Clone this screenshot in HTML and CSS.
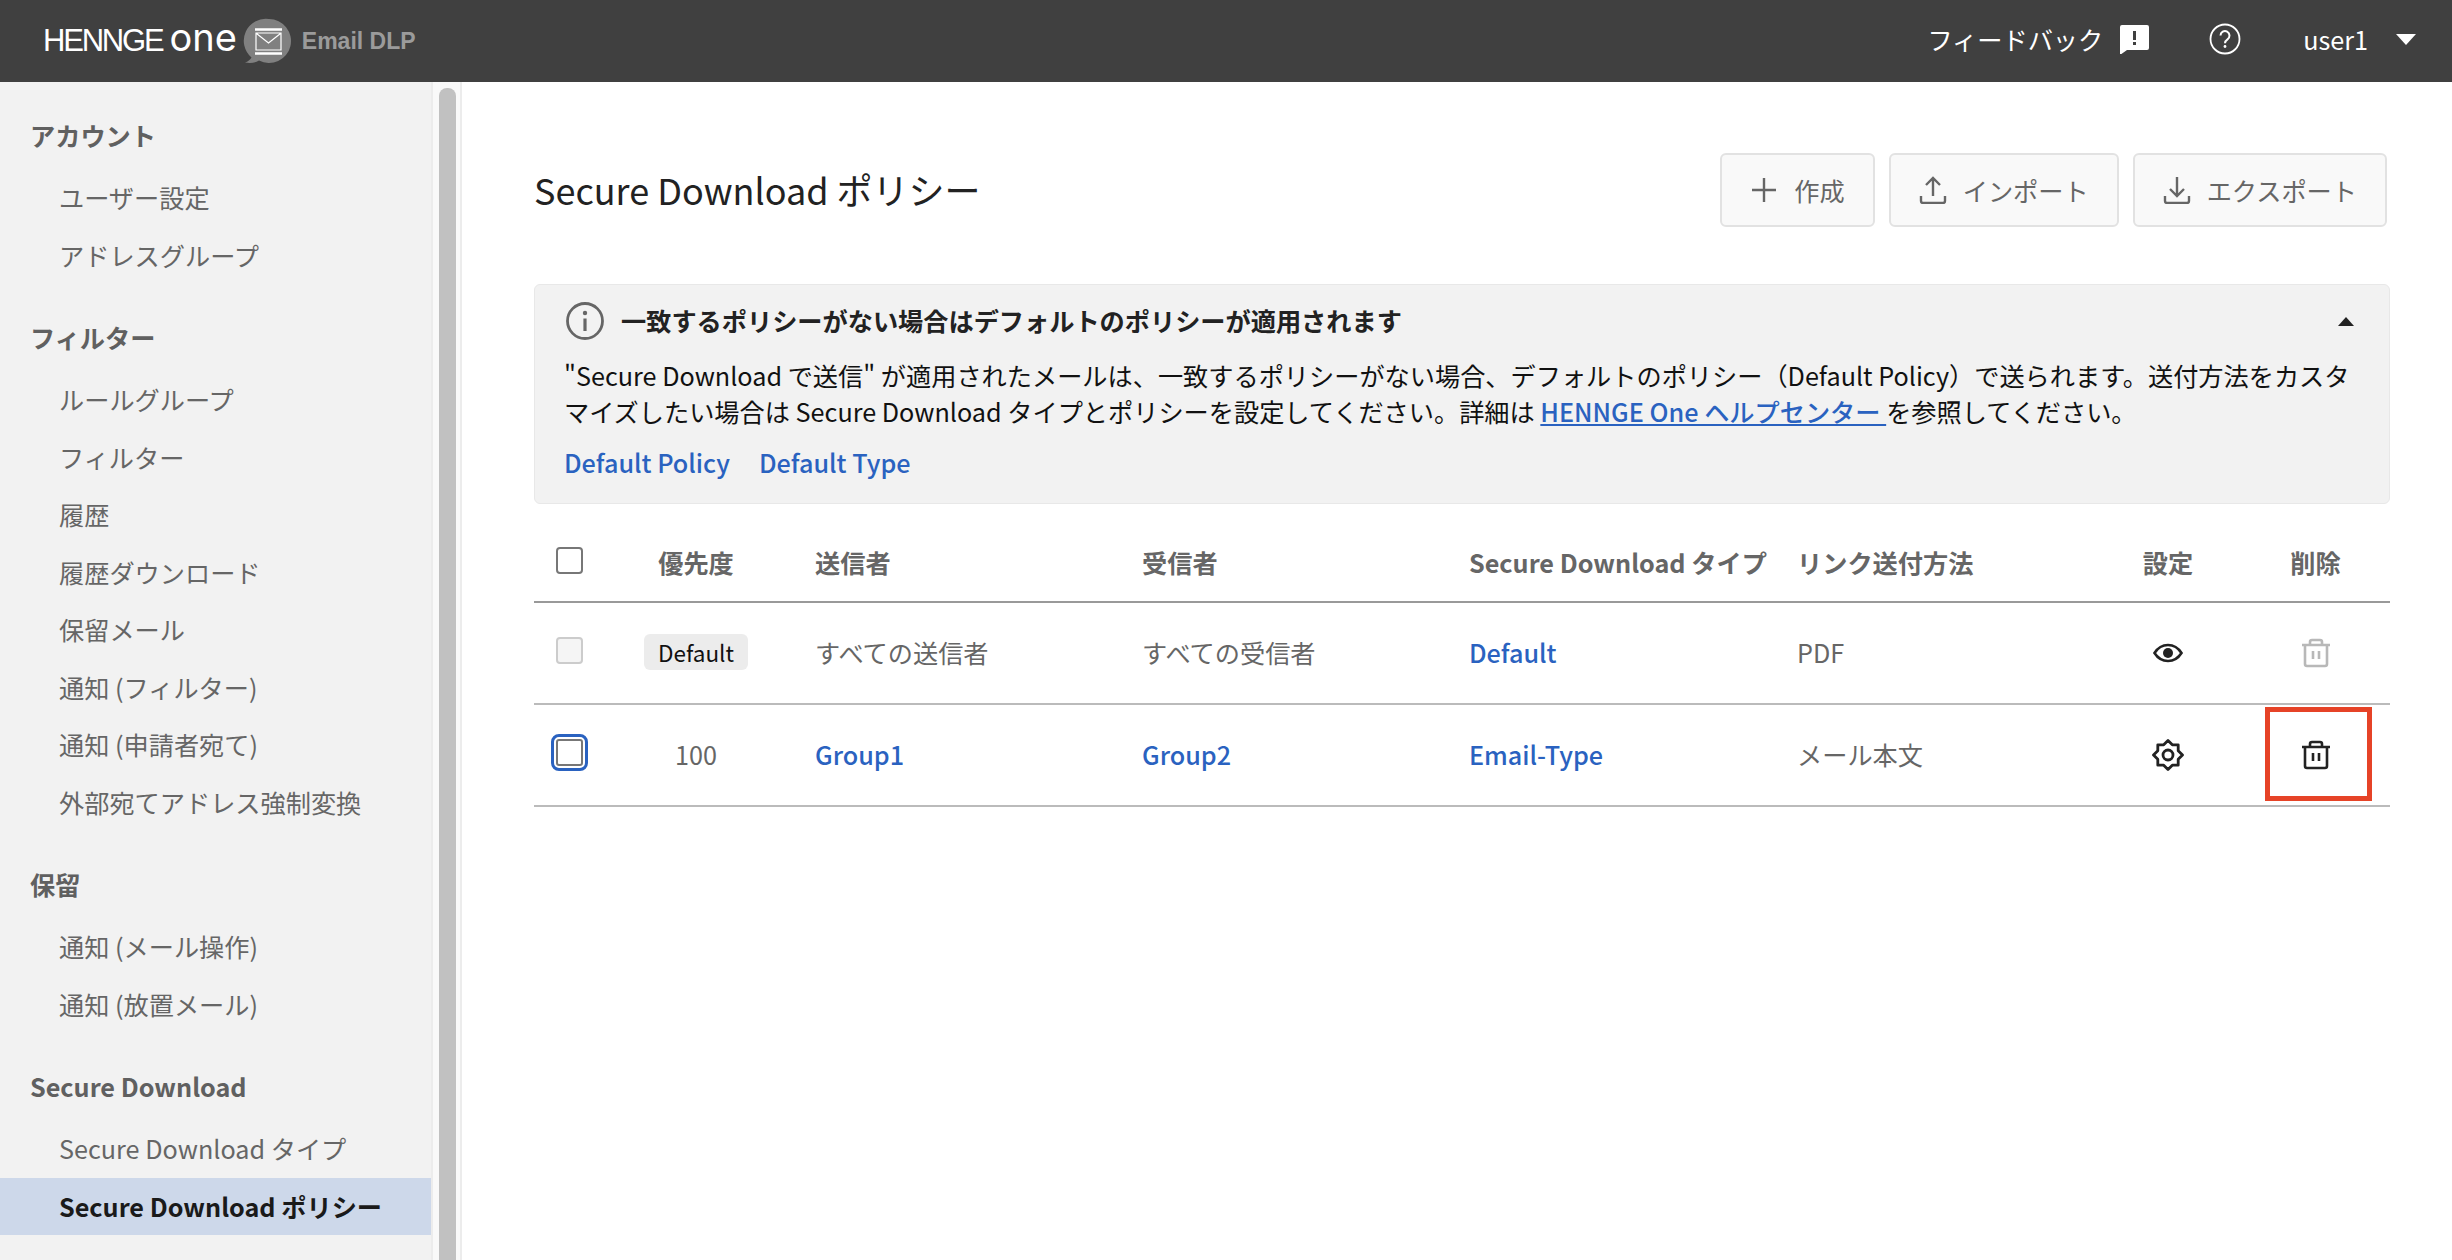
FILE: index.html

```html
<!DOCTYPE html>
<html lang="ja">
<head>
  <meta charset="UTF-8" />
  <title>Secure Download ポリシー</title>
  <link rel="stylesheet" href="styles.css">
</head>
<body>
  <header class="topbar">
    <div class="brand">
      <span class="brand-name">HENNGE</span>
      <span class="brand-one">one</span>
      <svg class="brand-icon" viewBox="0 0 48 46" width="48" height="46">
        <path d="M26 1a22 22 0 1 1-10 41.600C12 45 7 45.500 2 44.500c3-1 5-2.500 6.500-5A22 22 0 0 1 26 1z" fill="#808080"/>
        <path d="M12 11.500h27M12 35.500h27" stroke="#fff" stroke-width="2.500" fill="none"/>
        <path d="M13 15h25v17H13zM13.500 15.500l12 9.500 12-9.500" stroke="#fff" stroke-width="1.200" fill="none"/>
      </svg>
      <span class="brand-app">Email DLP</span>
    </div>
    <div class="top-actions">
      <span class="feedback">フィードバック</span>
      <svg class="icon-feedback" viewBox="0 0 30 30" width="30" height="30">
        <path d="M1 3a2 2 0 0 1 2-2h25a2 2 0 0 1 2 2v21a2 2 0 0 1-2 2H8l-7 5z" fill="#fff"/>
        <path d="M14 7h3v9h-3zM14 18h3v3h-3z" fill="#404040"/>
      </svg>
      <svg class="icon-help" viewBox="0 0 32 32" width="32" height="32">
        <circle cx="16" cy="16" r="14.500" fill="none" stroke="#fff" stroke-width="1.800"/>
        <path d="M11.500 12.500a4.500 4.500 0 1 1 7 3.800c-1.700 1.100-2.500 2-2.500 4" fill="none" stroke="#fff" stroke-width="2"/>
        <circle cx="16" cy="23.500" r="1.400" fill="#fff"/>
      </svg>
      <span class="user">user1</span>
      <span class="user-caret"></span>
    </div>
  </header>

  <div class="layout">
    <aside class="sidebar">
      <nav class="nav">
        <div class="nav-group">
          <div class="nav-head">アカウント</div>
          <a class="nav-item">ユーザー設定</a>
          <a class="nav-item">アドレスグループ</a>
        </div>
        <div class="nav-group">
          <div class="nav-head">フィルター</div>
          <a class="nav-item">ルールグループ</a>
          <a class="nav-item">フィルター</a>
          <a class="nav-item">履歴</a>
          <a class="nav-item">履歴ダウンロード</a>
          <a class="nav-item">保留メール</a>
          <a class="nav-item">通知 (フィルター)</a>
          <a class="nav-item">通知 (申請者宛て)</a>
          <a class="nav-item">外部宛てアドレス強制変換</a>
        </div>
        <div class="nav-group">
          <div class="nav-head">保留</div>
          <a class="nav-item">通知 (メール操作)</a>
          <a class="nav-item">通知 (放置メール)</a>
        </div>
        <div class="nav-group">
          <div class="nav-head">Secure Download</div>
          <a class="nav-item">Secure Download タイプ</a>
          <a class="nav-item active">Secure Download ポリシー</a>
        </div>
      </nav>
      <div class="scroll-track"><div class="scroll-thumb"></div></div>
    </aside>

    <main class="main">
      <div class="title-row">
        <h1>Secure Download ポリシー</h1>
        <div class="buttons">
          <button class="btn">
            <svg viewBox="0 0 28 28" width="28" height="28"><path d="M14 2v24M2 14h24" stroke="#666" stroke-width="2.400" fill="none"/></svg>
            作成
          </button>
          <button class="btn">
            <svg viewBox="0 0 28 28" width="28" height="28"><path d="M14 20V2M7 9l7-7 7 7M2 20v5a2 2 0 0 0 2 2h20a2 2 0 0 0 2-2v-5" stroke="#666" stroke-width="2.400" fill="none"/></svg>
            インポート
          </button>
          <button class="btn">
            <svg viewBox="0 0 28 28" width="28" height="28"><path d="M14 1v19M7 13l7 7 7-7M2 20v5a2 2 0 0 0 2 2h20a2 2 0 0 0 2-2v-5" stroke="#666" stroke-width="2.400" fill="none"/></svg>
            エクスポート
          </button>
        </div>
      </div>

      <section class="notice">
        <div class="notice-head">
          <svg viewBox="0 0 38 38" width="38" height="38">
            <circle cx="19" cy="19" r="17.500" fill="none" stroke="#666" stroke-width="2.800"/>
            <path d="M19 16.500V29" stroke="#666" stroke-width="3.200" fill="none"/>
            <circle cx="19" cy="11" r="2.200" fill="#666"/>
          </svg>
          <strong>一致するポリシーがない場合はデフォルトのポリシーが適用されます</strong>
          <span class="notice-caret"></span>
        </div>
        <p>"Secure Download で送信" が適用されたメールは、一致するポリシーがない場合、デフォルトのポリシー（Default Policy）で送られます。送付方法をカスタマイズしたい場合は Secure Download タイプとポリシーを設定してください。詳細は <a class="help-link">HENNGE One ヘルプセンター </a>を参照してください。</p>
        <div class="notice-links">
          <a class="link">Default Policy</a>
          <a class="link">Default Type</a>
        </div>
      </section>

      <table class="policy">
        <colgroup>
          <col class="c-check"><col class="c-prio"><col class="c-from"><col class="c-to"><col class="c-type"><col class="c-send"><col class="c-set"><col class="c-del">
        </colgroup>
        <thead>
          <tr>
            <th class="center"><span class="check"></span></th>
            <th class="center">優先度</th>
            <th class="pad-from">送信者</th>
            <th>受信者</th>
            <th>Secure Download タイプ</th>
            <th>リンク送付方法</th>
            <th class="center">設定</th>
            <th class="center">削除</th>
          </tr>
        </thead>
        <tbody>
          <tr>
            <td class="center"><span class="check disabled"></span></td>
            <td class="center"><span class="tag">Default</span></td>
            <td class="pad-from">すべての送信者</td>
            <td>すべての受信者</td>
            <td><a class="link">Default</a></td>
            <td>PDF</td>
            <td class="center">
              <svg class="cell-icon" viewBox="0 0 32 32" width="32" height="32">
                <path d="M2.500 16C6 10.500 10.500 8 16 8s10 2.500 13.500 8C26 21.500 21.500 24 16 24S6 21.500 2.500 16z" fill="none" stroke="#222" stroke-width="2.600"/>
                <circle cx="16" cy="16" r="5" fill="#222"/>
              </svg>
            </td>
            <td class="center">
              <svg class="cell-icon" viewBox="0 0 32 32" width="32" height="32">
                <path d="M2 8h28M10 8V5a2 2 0 0 1 2-2h8a2 2 0 0 1 2 2v3M5 8v19a2 2 0 0 0 2 2h18a2 2 0 0 0 2-2V8M13 14v8M19 14v8" fill="none" stroke="#b8b8b8" stroke-width="2.600"/>
              </svg>
            </td>
          </tr>
          <tr>
            <td class="center"><span class="check focused"></span></td>
            <td class="center">100</td>
            <td class="pad-from"><a class="link">Group1</a></td>
            <td><a class="link">Group2</a></td>
            <td><a class="link">Email-Type</a></td>
            <td>メール本文</td>
            <td class="center">
              <svg class="cell-icon" viewBox="0 0 32 32" width="32" height="32">
                <path d="M16 1.500l4.300 4.300h5.900v5.900l4.300 4.300-4.300 4.300v5.900h-5.900L16 30.500l-4.300-4.300H5.800v-5.900L1.500 16l4.300-4.300V5.800h5.900z" fill="none" stroke="#222" stroke-width="2.800" stroke-linejoin="round"/>
                <circle cx="16" cy="16" r="5" fill="none" stroke="#222" stroke-width="2.800"/>
              </svg>
            </td>
            <td class="center del-cell">
              <svg class="cell-icon" viewBox="0 0 32 32" width="32" height="32">
                <path d="M2 8h28M10 8V5a2 2 0 0 1 2-2h8a2 2 0 0 1 2 2v3M5 8v19a2 2 0 0 0 2 2h18a2 2 0 0 0 2-2V8M13 14v8M19 14v8" fill="none" stroke="#222" stroke-width="2.600"/>
              </svg>
              <span class="callout"></span>
            </td>
          </tr>
        </tbody>
      </table>
    </main>
  </div>
</body>
</html>
```

FILE: styles.css

```css
* { box-sizing: border-box; }
html, body { height: 100%; }
body { margin: 0; overflow: hidden; background: #fff; color: #666; font-family: "Noto Sans CJK JP", "Noto Sans", sans-serif; font-size: 25.2px; }

.topbar { height: 82px; background: #404040; display: flex; align-items: center; justify-content: space-between; padding-left: 43px; color: #fff; }
.brand { display: flex; align-items: center; }
.brand-name { font-family: "Liberation Sans", sans-serif; font-size: 31px; letter-spacing: -2.200px; }
.brand-one { font-family: Inter, sans-serif; font-size: 38px; font-weight: 400; line-height: 1; margin-left: 7px; margin-top: -8px; }
.brand-icon { margin-left: 6px; }
.brand-app { font-family: "Liberation Sans", sans-serif; font-weight: bold; font-size: 23px; color: #9b9b9b; margin-left: 11px; }

.top-actions { display: flex; align-items: center; padding-bottom: 5px; }
.icon-feedback { margin-left: 16px; }
.icon-help { margin-left: 60px; }
.user { margin-left: 62px; }
.user-caret { width: 0; height: 0; margin: 2px 36px 0 28px; border-left: 10px solid transparent; border-right: 10px solid transparent; border-top: 11px solid #fff; }

.layout { display: flex; height: 1178px; }
.sidebar { width: 462px; flex: none; display: flex; overflow: hidden; }
.nav { width: 431px; background: #f2f2f2; flex: none; }
.nav-group { padding-top: 21px; }
.nav-head { height: 66px; line-height: 65px; padding-left: 30px; font-weight: bold; color: #606060; }
.nav-item { display: block; height: 57.5px; line-height: 57px; padding-left: 59px; color: #666; }
.nav-item.active { background: #cdd8ea; color: #1a1a1a; font-weight: bold; }
.scroll-track { flex: 1; background: #f9f9f9; border-left: 2px solid #ececec; border-right: 2px solid #ececec; padding: 6px 4px 0 6px; }
.scroll-thumb { height: 100%; background: #c1c1c1; border-radius: 8px 8px 0 0; }

.main { flex: 1; padding: 71px 62px 0 72px; }
.title-row { display: flex; justify-content: space-between; align-items: center; height: 74px; padding-right: 3px; }
h1 { margin: 0; font-size: 36px; font-weight: 400; color: #222; padding-bottom: 2px; }
.buttons { display: flex; gap: 14px; }
.btn { height: 74px; padding: 0 28px; display: flex; align-items: center; gap: 16px; background: #f9f9f9; border: 2px solid #e2e2e2; border-radius: 6px; font: inherit; color: #666; }

.notice { margin-top: 57px; height: 220px; background: #f2f2f2; border: 1px solid #e8e8e8; border-radius: 6px; padding: 17px 29px 0; color: #111; }
.notice-head { display: flex; align-items: center; gap: 17px; height: 38px; padding-left: 2px; color: #222; }
.notice-head strong { flex: 1; padding-bottom: 2px; }
.notice-caret { width: 0; height: 0; margin-right: 6px; border-left: 8px solid transparent; border-right: 8px solid transparent; border-bottom: 9px solid #222; }
.notice p { margin: 17px 0 0; line-height: 36px; }
.help-link { color: #2a62c0; font-weight: 500; text-decoration: underline; }
.notice-links { display: flex; gap: 29px; margin-top: 15px; }
.link { color: #2a62c0; font-weight: 500; }

.policy { width: 100%; margin-top: 21px; border-collapse: collapse; table-layout: fixed; }
.c-check { width: 72px; }
.c-prio { width: 180px; }
.c-from { width: 356px; }
.c-to { width: 327px; }
.c-type { width: 328px; }
.c-send { width: 298px; }
.c-set { width: 146px; }
.c-del { width: 149px; }
.policy th { height: 77px; text-align: left; font-weight: bold; color: #666; border-bottom: 2px solid #999; padding: 0 0 3px; white-space: nowrap; }
.policy td { height: 102px; border-bottom: 2px solid #bbb; padding: 0 0 3px; color: #666; }
.policy .center { text-align: center; }
.pad-from { padding-left: 29px !important; }
.check { display: inline-block; width: 27px; height: 27px; margin: 0 2px 7px 0; border: 2px solid #777; border-radius: 4px; background: #fff; vertical-align: middle; }
.check.disabled { border-color: #ccc; background: #f5f5f5; }
.check.focused { outline: 3px solid #2a62c0; outline-offset: 2px; border-radius: 3px; }
.tag { display: inline-block; padding: 0 14px; height: 36px; line-height: 36px; background: #ececec; border-radius: 6px; font-size: 22.500px; color: #111; }
.cell-icon { vertical-align: middle; margin-bottom: 2px; }
.del-cell { position: relative; }
.callout { position: absolute; left: 24px; right: 18px; top: 2px; bottom: 4px; border: 5px solid #e64327; }
```
